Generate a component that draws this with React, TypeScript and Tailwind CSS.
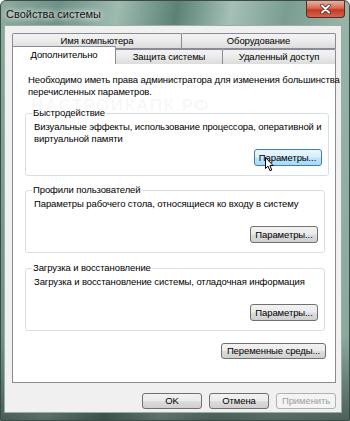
import React from 'react';

const btnBase =
  'flex items-center justify-center whitespace-nowrap rounded-[3px] border text-[9.5px] leading-none';
const btnNormal =
  'border-[#707070] bg-[linear-gradient(180deg,#f2f2f2_0%,#ebebeb_48%,#dddddd_52%,#cfcfcf_100%)] text-black';
const btnHover =
  'border-[#3c7fb1] bg-[linear-gradient(180deg,#eaf6fd_0%,#d9f0fc_48%,#bee6fd_52%,#a7d9f5_100%)] text-black';
const btnDisabled = 'border-[#adb2b5] bg-[#f4f4f4] text-[#a0a0a0]';
const tabBg = 'bg-[linear-gradient(180deg,#f3f3f3_0%,#ebebeb_50%,#dcdcdc_100%)]';

function Group({ title, lines, hover }: { title: string; lines: string[]; hover?: boolean }) {
  return (
    <fieldset className="relative ml-[12px] mr-[10px] rounded-[3px] border border-[#d5dfe5] pl-[8px] pr-[6px] pb-[9px]">
      <legend className="-ml-[2px] px-[1px] leading-[12px] text-black">{title}</legend>
      <div className="mt-[2px] h-[24px] whitespace-nowrap leading-[12px]">
        {lines.map((l) => (
          <div key={l}>{l}</div>
        ))}
      </div>
      <div className="mt-[4px] flex justify-end">
        <div className={`${btnBase} ${hover ? btnHover : btnNormal} h-[17px] w-[68px]`}>Параметры...</div>
      </div>
      {/* mouse pointer over the hovered button */}
      {hover && (
        <svg className="absolute right-[53px] top-[38px]" width="10" height="15" viewBox="0 0 10 15">
          <path
            d="M0.5 0.5 L0.5 11.5 L3 9.2 L5 13.8 L6.8 13 L4.9 8.6 L8.2 8.6 Z"
            fill="#fff"
            stroke="#000"
            strokeWidth="1"
            strokeLinejoin="round"
          />
        </svg>
      )}
    </fieldset>
  );
}

export default function App() {
  return (
    <div className="relative flex h-[421px] w-[350px] flex-col overflow-hidden rounded-t-[6px] border border-[#3c4a45] bg-[linear-gradient(180deg,rgba(0,0,0,0)_0%,rgba(0,0,0,0)_80%,rgba(30,40,38,0.55)_100%),linear-gradient(100deg,#8eab9f_0%,#6d9185_14%,#9fbbb0_28%,#5b8275_42%,#a5c0b6_55%,#7b9d91_68%,#97b4a9_82%,#86a69a_100%)] font-['Liberation_Sans',Arial,sans-serif] text-[9.5px] tracking-[-0.1px] text-black">
      {/* title bar */}
      <div className="flex h-[24px] shrink-0 items-start justify-between">
        <div className="mt-[7px] pl-[5px] text-[11px] leading-[13px] tracking-normal text-[#111] [text-shadow:0_0_5px_#fff,0_0_8px_#fff]">
          Свойства системы
        </div>
        <div className="mr-[4px] flex h-[17px] w-[39px] items-center justify-center rounded-b-[4px] border border-t-0 border-[#5a2a20] bg-[linear-gradient(180deg,#eab0a0_0%,#d66a55_45%,#c23a26_55%,#d7634a_100%)]">
          <svg width="11" height="10" viewBox="0 0 11 10">
            <path d="M2 1.5 L9 8.5 M9 1.5 L2 8.5" stroke="#3a1a12" strokeWidth="3.2" strokeLinecap="round" />
            <path d="M2 1.5 L9 8.5 M9 1.5 L2 8.5" stroke="#fff" strokeWidth="2" strokeLinecap="round" />
          </svg>
        </div>
      </div>

      {/* client area */}
      <div className="mb-[7px] ml-[3px] mr-[7px] flex flex-1 flex-col border border-[#9aaea6] bg-[#f0f0f0] pl-[7px] pr-[5px] pt-[7px]">
        {/* tabs row 1 */}
        <div className="flex h-[15px]">
          <div className={`flex w-[170px] items-center justify-center rounded-t-[2px] border border-b-0 border-[#898c95] ${tabBg}`}>
            Имя компьютера
          </div>
          <div className={`-ml-px flex flex-1 items-center justify-center rounded-t-[2px] border border-b-0 border-[#898c95] ${tabBg}`}>
            Оборудование
          </div>
        </div>
        {/* tabs row 2 */}
        <div className="relative z-10 -mb-px flex h-[16px] items-end border-t border-[#898c95]">
          <div className="-mt-[3px] flex h-[18px] w-[104px] items-center justify-center rounded-t-[2px] border border-b-0 border-[#898c95] bg-white">
            Дополнительно
          </div>
          <div className={`-ml-px flex h-[15px] w-[108px] items-center justify-center rounded-t-[2px] border border-b-0 border-[#898c95] ${tabBg}`}>
            Защита системы
          </div>
          <div className={`-ml-px flex h-[15px] flex-1 items-center justify-center rounded-t-[2px] border border-b-0 border-[#898c95] ${tabBg}`}>
            Удаленный доступ
          </div>
        </div>

        {/* panel */}
        <div className="relative flex h-[320px] flex-col border border-[#898c95] bg-white">
          <div className="pointer-events-none absolute left-[18px] top-[33px] text-[17px] font-bold leading-none tracking-[1.5px] text-black/[0.04]">
            НАСТРОЙКАПК.РФ
          </div>
          <div className="whitespace-nowrap pl-[15px] pt-[10px] leading-[12px]">
            <div>Необходимо иметь права администратора для изменения большинства</div>
            <div>перечисленных параметров.</div>
          </div>
          <div className="mt-[9px]">
            <Group
              title="Быстродействие"
              lines={['Визуальные эффекты, использование процессора, оперативной и', 'виртуальной памяти']}
              hover
            />
          </div>
          <div className="mt-[8px]">
            <Group title="Профили пользователей" lines={['Параметры рабочего стола, относящиеся ко входу в систему']} />
          </div>
          <div className="mt-[9px]">
            <Group title="Загрузка и восстановление" lines={['Загрузка и восстановление системы, отладочная информация']} />
          </div>
          <div className="mr-[9px] mt-[12px] flex justify-end">
            <div className={`${btnBase} ${btnNormal} h-[16px] w-[105px]`}>Переменные среды...</div>
          </div>
        </div>

        {/* dialog buttons */}
        <div className="mt-[10px] flex justify-end gap-[7px]">
          <div className={`${btnBase} ${btnNormal} h-[16px] w-[60px]`}>OK</div>
          <div className={`${btnBase} ${btnNormal} h-[16px] w-[60px]`}>Отмена</div>
          <div className={`${btnBase} ${btnDisabled} h-[16px] w-[60px]`}>Применить</div>
        </div>
      </div>
    </div>
  );
}
